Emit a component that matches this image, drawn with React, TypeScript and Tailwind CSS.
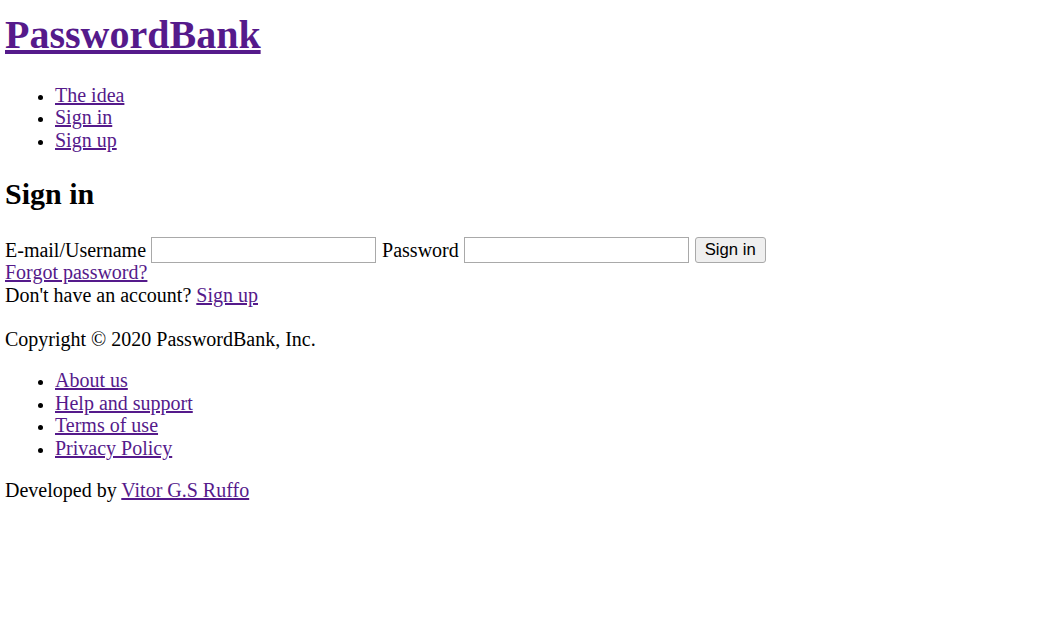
const linkCls = 'text-[#551a8b] underline';

const NavList = ({ items }: { items: string[] }) => (
  <ul className="list-disc pl-[50px] marker:text-[18px]">
    {items.map((item) => (
      <li key={item}>
        <a href="#" className={linkCls}>
          {item}
        </a>
      </li>
    ))}
  </ul>
);

export default function App() {
  return (
    <div className="min-h-screen bg-white px-[5px] pt-[12.3px] text-[20px] leading-[22.5px] text-black [font-family:'Liberation_Serif','Times_New_Roman',serif]">
      <h1 className="text-[40px] font-bold leading-[46px]">
        <a href="#" className={linkCls}>
          PasswordBank
        </a>
      </h1>

      <div className="mt-[25.4px]">
        <NavList items={['The idea', 'Sign in', 'Sign up']} />
      </div>

      <h2 className="mt-[26.1px] text-[30px] font-bold leading-[33.75px]">Sign in</h2>

      <form className="mt-[25.65px] flex h-[24.5px] items-start gap-[5px]" onSubmit={(e) => e.preventDefault()}>
        <span className="mt-[2px]">E-mail/Username</span>
        <input
          type="text"
          className="h-[26px] w-[225px] border border-[#a9a9a9] bg-white px-[2px]"
        />
        <span className="ml-[1px] mt-[2px]">Password</span>
        <input
          type="password"
          className="h-[26px] w-[225px] border border-[#a9a9a9] bg-white px-[2px]"
        />
        <button
          type="submit"
          className="ml-[1px] h-[26px] w-[71px] rounded-[3px] border border-[#a9a9a9] bg-[#efefef] pt-[1px] text-[16.7px] leading-[normal] text-black [font-family:'Liberation_Sans',Arial,sans-serif]"
        >
          Sign in
        </button>
      </form>

      <div>
        <a href="#" className={linkCls}>
          Forgot password?
        </a>
      </div>
      <div>
        Don't have an account?{' '}
        <a href="#" className={linkCls}>
          Sign up
        </a>
      </div>

      <footer className="mt-[21.5px]">
        <p>Copyright © 2020 PasswordBank, Inc.</p>
        <div className="mt-[19.1px]">
          <NavList items={['About us', 'Help and support', 'Terms of use', 'Privacy Policy']} />
        </div>
        <p className="mt-[20px]">
          Developed by{' '}
          <a href="#" className={linkCls}>
            Vitor G.S Ruffo
          </a>
        </p>
      </footer>
    </div>
  );
}
